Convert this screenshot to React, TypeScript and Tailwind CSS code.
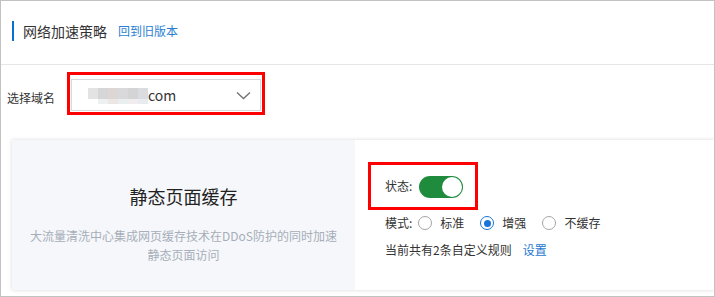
import React from "react";

const font = { fontFamily: '"Noto Sans CJK SC", "Liberation Sans", sans-serif' };

function Radio({ checked, label }: { checked?: boolean; label: string }) {
  return (
    <div className="flex items-center">
      <span
        className={
          checked
            ? "flex h-[14px] w-[14px] items-center justify-center rounded-full border border-[#1a73d6] bg-white"
            : "h-[14px] w-[14px] rounded-full border border-[#a6a6a6] bg-white"
        }
      >
        {checked && <span className="h-[7px] w-[7px] rounded-full bg-[#1a73d6]" />}
      </span>
      <span className="ml-[8px] text-[12px] leading-[20px] text-[#333]">{label}</span>
    </div>
  );
}

export default function App() {
  return (
    <div
      className="flex h-[297px] w-[715px] flex-col overflow-hidden border border-[#c2c2c2] bg-white"
      style={font}
    >
      {/* header */}
      <div className="flex h-[64px] shrink-0 items-start border-b border-[#e6e6e6] pl-[11px] pt-[20px]">
        <div className="flex h-[20px] items-center">
          <span className="h-[20px] w-[2px] bg-[#0b6fd0]" />
          <span className="ml-[9px] text-[14px] leading-[20px] text-[#333]">网络加速策略</span>
          <span className="ml-[11px] text-[12px] leading-[20px] text-[#2a7fd3]">回到旧版本</span>
        </div>
      </div>

      {/* domain row */}
      <div className="flex shrink-0 items-start pl-[6px] pt-[7px]">
        <span className="mt-[18px] w-[60px] text-[12px] leading-[16px] text-[#333]">选择域名</span>
        <div className="border-[3px] border-[#ff0000] px-px pb-px pt-[4px]">
          <div className="flex h-[32px] w-[190px] items-center border border-[#d9d9d9] bg-white pl-[16px] pr-[9px]">
            <span className="relative mt-[2px] flex h-[16px] w-[60px] flex-col">
              <span className="flex h-[11px] w-full">
                <span className="h-full w-[10px] bg-[#e3e3e3]" />
                <span className="h-full w-[10px] bg-[#d6d6d8]" />
                <span className="h-full w-[10px] bg-[#dcd6d4]" />
                <span className="h-full w-[10px] bg-[#d9d9db]" />
                <span className="h-full w-[10px] bg-[#d4d4d6]" />
                <span className="h-full w-[10px] bg-[#dadcdf]" />
              </span>
              <span className="flex h-[5px] w-full pl-[10px]">
                <span className="h-full w-[10px] bg-[#eef1f1]" />
                <span className="h-full w-[10px] bg-[#ece6e4]" />
                <span className="h-full w-[10px] bg-[#e9eeee]" />
                <span className="h-full w-[10px] bg-[#f1ecee]" />
                <span className="h-full w-[10px] bg-[#e8ecf0]" />
              </span>
            </span>
            <span className="text-[14px] leading-[20px] text-[#333]">com</span>
            <span className="flex-1" />
            <svg width="15" height="9" viewBox="0 0 15 9" className="mt-[1px]">
              <path d="M1 1.5 L7.5 7.5 L14 1.5" fill="none" stroke="#707070" strokeWidth="1.3" />
            </svg>
          </div>
        </div>
      </div>

      {/* card */}
      <div className="ml-[11px] mt-[25px] flex h-[150px] shrink-0 shadow-[0_0_4px_rgba(0,0,0,0.16)]">
        <div className="flex w-[343px] flex-col items-center bg-[#f5f7fa] pt-[43px]">
          <span className="text-[18px] leading-[26px] text-[#222]">静态页面缓存</span>
          <span className="mt-[17px] whitespace-nowrap text-center text-[12px] leading-[19px] text-[#a7aeb9]">
            大流量清洗中心集成网页缓存技术在DDoS防护的同时加速
            <br />
            静态页面访问
          </span>
        </div>
        <div className="flex flex-1 flex-col bg-white pl-[13px] pt-[22px]">
          <div className="flex h-[48px] w-[110px] items-center border-[3px] border-[#ff0000] pl-[14px]">
            <span className="text-[12px] leading-[20px] text-[#333]">状态:</span>
            <span className="relative ml-[7px] mt-[2px] h-[22px] w-[44px] rounded-full bg-[#1f8c3d]">
              <span className="absolute right-[1px] top-[1px] h-[20px] w-[20px] rounded-full bg-white" />
            </span>
          </div>
          <div className="ml-[17px] mt-[3px] flex h-[20px] items-center">
            <span className="mr-[6px] text-[12px] leading-[20px] text-[#333]">模式:</span>
            <div className="flex items-center gap-[16px]">
              <Radio label="标准" />
              <Radio checked label="增强" />
              <Radio label="不缓存" />
            </div>
          </div>
          <div className="ml-[17px] mt-[7px] flex h-[20px] items-center">
            <span className="text-[12px] leading-[20px] text-[#333]">当前共有2条自定义规则</span>
            <span className="ml-[11px] text-[12px] leading-[20px] text-[#1f78d1]">设置</span>
          </div>
        </div>
      </div>
    </div>
  );
}
